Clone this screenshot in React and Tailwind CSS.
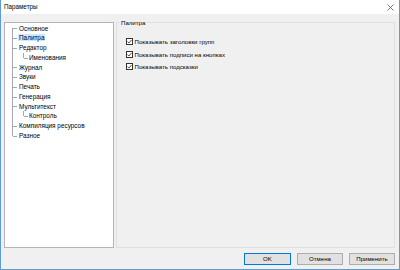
import { useState } from 'react'

const tree = [
  { label: 'Основное', level: 0 },
  { label: 'Палитра', level: 0 },
  { label: 'Редактор', level: 0 },
  { label: 'Именования', level: 1 },
  { label: 'Журнал', level: 0 },
  { label: 'Звуки', level: 0 },
  { label: 'Печать', level: 0 },
  { label: 'Генерация', level: 0 },
  { label: 'Мультитекст', level: 0 },
  { label: 'Контроль', level: 1 },
  { label: 'Компиляция ресурсов', level: 0 },
  { label: 'Разное', level: 0 },
]

const options = [
  'Показывать заголовки групп',
  'Показывать подписи на кнопках',
  'Показывать подсказки',
]

function TreeRow({ item, index, selected, onSelect }) {
  const first = index === 0
  const last = index === tree.length - 1
  return (
    <div className="relative h-[9.75px] flex items-center cursor-default" onClick={onSelect}>
      {/* root trunk */}
      <span
        className={
          'absolute left-[7px] w-px bg-[#a8a8a8] ' +
          (first ? 'top-1/2 bottom-0' : last ? 'top-0 h-1/2' : 'top-0 bottom-0')
        }
      />
      {item.level === 0 ? (
        <>
          <span className="absolute left-[8px] top-1/2 w-[4px] h-px bg-[#a8a8a8]" />
          <div className="pl-[13px]">
            <span className={'px-px leading-[9px] ' + (selected ? 'bg-[#cce8ff]' : '')}>{item.label}</span>
          </div>
        </>
      ) : (
        <>
          <span className="absolute left-[18px] top-0 h-1/2 w-px bg-[#a8a8a8]" />
          <span className="absolute left-[19px] top-1/2 w-[4px] h-px bg-[#a8a8a8]" />
          <div className="pl-[23px]">
            <span className={'px-px leading-[9px] ' + (selected ? 'bg-[#cce8ff]' : '')}>{item.label}</span>
          </div>
        </>
      )}
    </div>
  )
}

function Check({ label }) {
  const [on, setOn] = useState(true)
  return (
    <div className="flex items-center h-[12.5px] gap-[1.5px] cursor-default" onClick={() => setOn(!on)}>
      <span className="w-[7px] h-[7px] border border-[#333] bg-white flex items-center justify-center">
        {on && (
          <svg width="5" height="5" viewBox="0 0 5 5">
            <path d="M0.5 2.6 L1.9 4 L4.5 1" fill="none" stroke="#222" strokeWidth="0.8" />
          </svg>
        )}
      </span>
      <span className="text-[6.1px]">{label}</span>
    </div>
  )
}

export default function App() {
  const [selected, setSelected] = useState(1)
  return (
    <div
      className="w-[400px] h-[270px] flex flex-col bg-[#f0f0f0] border-x border-b border-[#5d9cd6] text-[6.4px] text-black overflow-hidden select-none"
      style={{ fontFamily: '"Liberation Sans", Arial, sans-serif' }}
    >
      <div className="h-[14px] bg-white flex items-center justify-between pl-[3px] pr-[5px] flex-shrink-0">
        <span className="text-[6.3px]">Параметры</span>
        <svg width="7" height="7" viewBox="0 0 7 7">
          <path d="M0.5 0.5 L6.5 6.5 M6.5 0.5 L0.5 6.5" stroke="#555" strokeWidth="0.8" />
        </svg>
      </div>

      <div className="flex-1 flex gap-[2px] pt-[8px] pl-[3px] pr-[4px] min-h-0">
        <div className="w-[110px] bg-white border border-[#b4b4b4] pt-[0.5px]">
          {tree.map((item, i) => (
            <TreeRow key={item.label} item={item} index={i} selected={i === selected} onSelect={() => setSelected(i)} />
          ))}
        </div>
        <div className="flex-1 relative border border-[#e0e0e0] pt-[12.5px] pl-[9px]">
          <span className="absolute -top-[5px] left-[3px] px-px bg-[#f0f0f0] leading-[9px] text-[6.1px]">Палитра</span>
          {options.map(o => (
            <Check key={o} label={o} />
          ))}
        </div>
      </div>

      <div className="h-[21px] flex-shrink-0 flex items-start justify-end gap-[6px] pt-[5px] pr-[4px]">
        <button className="w-[47px] h-[12px] bg-[#e1e1e1] border border-[#0078d7] leading-none text-[6.1px]">OK</button>
        <button className="w-[46px] h-[12px] bg-[#e1e1e1] border border-[#adadad] leading-none text-[6.1px]">Отмена</button>
        <button className="w-[46px] h-[12px] bg-[#e1e1e1] border border-[#adadad] leading-none text-[6.1px]">Применить</button>
      </div>
    </div>
  )
}
